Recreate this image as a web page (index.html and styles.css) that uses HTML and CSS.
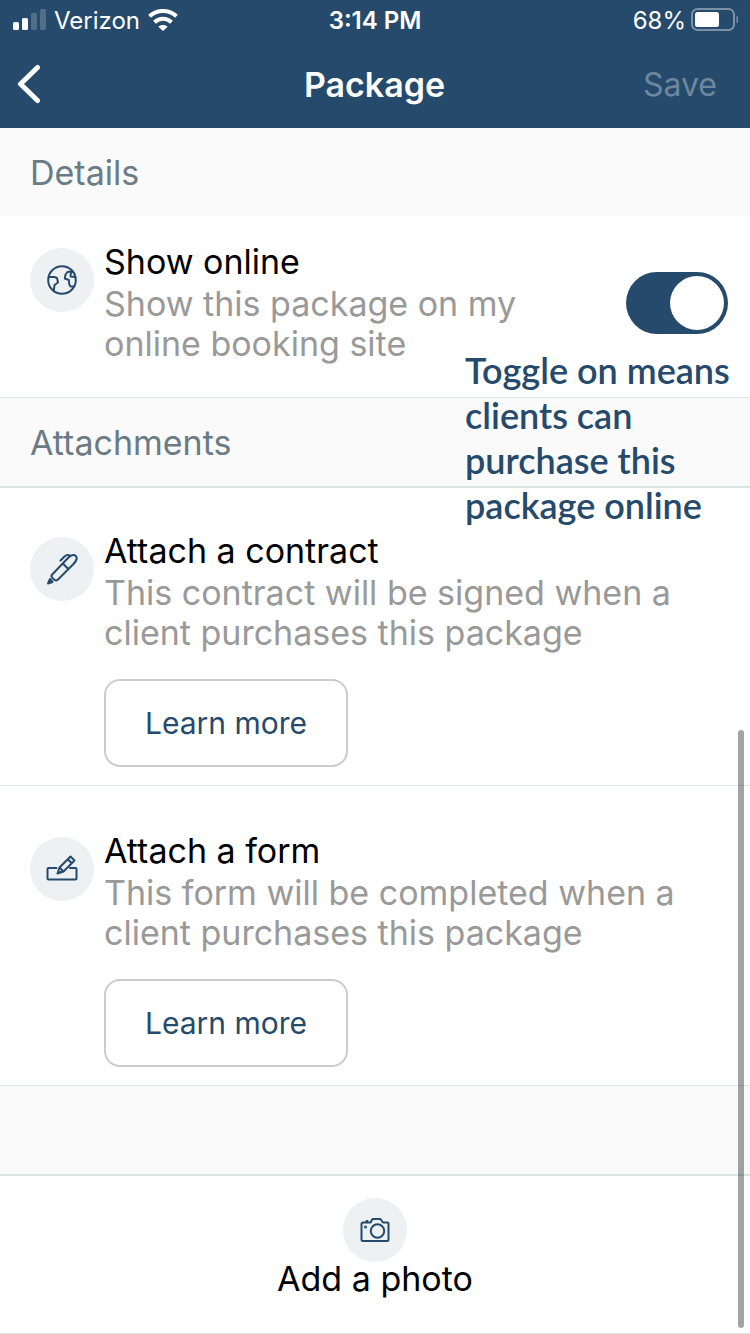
FILE: index.html
```html
<!DOCTYPE html>
<html lang="en">
<head>
<meta charset="utf-8">
<meta name="viewport" content="width=device-width, initial-scale=1">
<title>Package</title>
<link rel="stylesheet" href="styles.css">
</head>
<body>
<header class="top">
  <div class="status">
    <div class="status-left">
      <svg class="signal" width="34" height="22" viewBox="0 0 34 22" fill="#fff" aria-hidden="true">
        <rect x="1" y="13" width="6" height="8" rx="1.5"/><rect x="10" y="9" width="6" height="12" rx="1.5"/>
        <g opacity=".2"><rect x="19" y="4" width="6" height="17" rx="1.5"/><rect x="28" y="0" width="6" height="21" rx="1.5"/></g>
      </svg>
      <span>Verizon</span>
      <svg class="wifi" width="30" height="22" viewBox="0 0 30 22" aria-hidden="true">
        <path d="M1.5 7.2C9 .2 21 .2 28.5 7.2M6.5 13.3C11.5 8.7 18.5 8.7 23.5 13.3" fill="none" stroke="#fff" stroke-width="4"/>
        <path d="M10.3 17.8C13 15.4 17 15.400 19.700 17.800L15 22Z" fill="#fff"/>
      </svg>
    </div>
    <span class="clock">3:14 PM</span>
    <div class="status-right">
      <span>68%</span>
      <svg width="48" height="24" viewBox="0 0 48 24" aria-hidden="true">
        <rect x="2" y="1" width="42" height="21" rx="5.5" fill="none" stroke="#7c91a6" stroke-width="2"/>
        <rect x="5" y="4" width="24" height="15" rx="2.5" fill="#fff"/>
        <path d="M46.500 7.500c2.600 1.500 2.600 6.500 0 8z" fill="#7c91a6"/>
      </svg>
    </div>
  </div>
  <nav class="nav">
    <button class="back" type="button" aria-label="Back">
      <svg width="24" height="40" viewBox="0 0 24 40" aria-hidden="true"><path d="M21.500 3.500L4.500 20L21.500 36.500" fill="none" stroke="#fff" stroke-width="5" stroke-linecap="round" stroke-linejoin="round"/></svg>
    </button>
    <h1 class="title">Package</h1>
    <button class="save" type="button" disabled>Save</button>
  </nav>
</header>
<main class="content">
  <h2 class="section">Details</h2>
  <section class="row row-online">
    <span class="badge">
      <svg class="icon" viewBox="0 0 32 32" aria-hidden="true"><circle cx="16" cy="16" r="13.8"/><path d="M3 13H8.500L11 14L12 18.500L8.500 21L7.800 26.500M26.500 7.200L21.500 8L19.500 10.500L18.800 14.500L22.800 16L23.300 20.500L24.500 22.500H27.500M26.500 7.200L24.800 9.500L24.500 12.500L29 13"/></svg>
    </span>
    <label class="copy" for="online">
      <span class="name">Show online</span>
      <span class="desc">Show this package on my<br>online booking site</span>
    </label>
    <input class="toggle" id="online" type="checkbox" role="switch" checked>
    <p class="note">Toggle on means clients can purchase this package online</p>
  </section>
  <h2 class="section ruled">Attachments</h2>
  <section class="row row-attach">
    <span class="badge">
      <svg class="icon" viewBox="0 0 32 32" aria-hidden="true"><path d="M6.2 21.500L21.500 5.500C24.500 2 28 1 29.800 3C31.500 5 30.500 8 27.500 11L12 26.500C10.500 28 9 27.500 8 26.500L6.500 25C5.500 24 5.200 22.500 6.200 21.500ZM16.800 10.500L22.300 16M14.500 7.500L18.500 3.500C20.500 1.500 22.500 1.500 24.500 2.800"/><path d="M2 30.500L4 26L6.500 29Z" fill="#254a6b"/></svg>
    </span>
    <div class="copy">
      <h3 class="name">Attach a contract</h3>
      <p class="desc">This contract will be signed when a<br>client purchases this package</p>
      <button class="more" type="button">Learn more</button>
    </div>
  </section>
  <section class="row row-attach row-form">
    <span class="badge">
      <svg class="icon" viewBox="0 0 32 32" aria-hidden="true"><path d="M10.5 15H2.5Q1.5 15 1.5 16V25.5Q1.5 26.5 2.5 26.5H29.5Q30.5 26.5 30.5 25.5V16Q30.5 15 29.5 15H24M11.5 20.5L13.5 14.5L24.5 3.5L28.5 7.5L17.5 18.5ZM13.5 14.5L17.5 18.5M21.8 6.2L25.8 10.2M11.5 20.5L15 18.8"/></svg>
    </span>
    <div class="copy">
      <h3 class="name">Attach a form</h3>
      <p class="desc">This form will be completed when a<br>client purchases this package</p>
      <button class="more" type="button">Learn more</button>
    </div>
  </section>
  <div class="section ruled"></div>
  <button class="photo" type="button">
    <span class="badge">
      <svg class="icon" viewBox="0 0 32 32" aria-hidden="true"><path d="M4 8.500H11.500L13.500 5H21.500L24 8.500H28Q29.500 8.500 29.500 10V25.500Q29.500 27 28 27H4Q2.500 27 2.500 25.500V10Q2.500 8.500 4 8.500ZM7.500 7H8.500"/><circle cx="18.500" cy="17" r="6.700"/><circle cx="6.500" cy="13" r=".6"/></svg>
    </span>
    <span class="name">Add a photo</span>
  </button>
  <div class="thumb"></div>
</main>
</body>
</html>
```

FILE: styles.css
```css
* { box-sizing: border-box; }
body {
  margin: 0;
  min-height: 100vh;
  display: flex;
  flex-direction: column;
  background: #fff;
  color: #000;
  font-family: Inter, "Liberation Sans", sans-serif;
  font-size: 34px;
}
button { font: inherit; color: inherit; background: none; border: 0; padding: 0; }
h1, h2, h3, p { margin: 0; font-weight: 400; }
svg { display: block; flex: none; }

.top { background: #254a6b; color: #fff; }
.status {
  display: grid;
  grid-template-columns: 1fr auto 1fr;
  align-items: center;
  height: 40px;
  padding: 0 12px;
  font-size: 24px;
}
.status-left, .status-right { display: flex; align-items: center; }
.status-left { gap: 8px; }
.status-right { justify-content: flex-end; gap: 4px; }
.clock { font-weight: 600; }
.nav {
  display: grid;
  grid-template-columns: 1fr auto 1fr;
  align-items: center;
  height: 88px;
  padding: 0 33px 0 16px;
}
.back { justify-self: start; }
.title { font-size: 34px; font-weight: 600; padding-left: 16px; }
.save { justify-self: end; color: #6f879c; font-size: 32px; }

.section {
  display: flex;
  align-items: center;
  height: 88px;
  padding: 0 30px;
  background: #fafafa;
  color: #6a7b86;
  font-size: 34px;
}
.ruled { height: 90px; border-bottom: 2px solid #dce6e9; }

.row {
  position: relative;
  display: flex;
  align-items: flex-start;
  gap: 10px;
  padding: 0 22px 18px 30px;
  border-bottom: 1px solid #dce6e9;
}
.row-online { padding-top: 24px; padding-bottom: 33px; }
.row-attach { padding-top: 41px; }
.row-form { padding-top: 43px; }
.row .badge { margin-top: 8px; }
.badge {
  display: grid;
  place-items: center;
  flex: none;
  width: 64px;
  height: 64px;
  border-radius: 50%;
  background: #edf1f4;
}
.icon {
  width: 32px;
  height: 32px;
  fill: none;
  stroke: #254a6b;
  stroke-width: 2;
  stroke-linecap: round;
  stroke-linejoin: round;
}
.copy { flex: 1; }
.name { display: block; font-size: 34px; line-height: 44px; }
.desc { display: block; color: #999; font-size: 34px; line-height: 40px; }
.more {
  margin-top: 26px;
  width: 244px;
  height: 88px;
  border: 2px solid #ccc;
  border-radius: 16px;
  color: #254a6b;
  font-size: 30px;
}

.toggle {
  appearance: none;
  flex: none;
  display: flex;
  justify-content: flex-end;
  width: 102px;
  height: 62px;
  margin: 32px 0 0;
  padding: 4px;
  border-radius: 31px;
  background: #254a6b;
}
.toggle::before {
  content: "";
  width: 54px;
  height: 54px;
  border-radius: 50%;
  background: #fff;
}
.toggle:not(:checked) { justify-content: flex-start; background: #ccc; }

.note {
  position: absolute;
  z-index: 1;
  top: 132px;
  right: 10px;
  width: 275px;
  color: #254a6b;
  font-family: Lato, sans-serif;
  font-size: 36px;
  font-weight: 600;
  line-height: 45px;
}

.photo {
  display: flex;
  flex-direction: column;
  align-items: center;
  width: 100%;
  padding: 22px 0 27px;
  border-bottom: 1px solid #dce6e9;
}
.photo .name { line-height: 34px; margin-bottom: 10px; }
.thumb {
  position: fixed;
  right: 6px;
  bottom: 6px;
  width: 6px;
  height: 598px;
  border-radius: 3px;
  background: rgba(0, 0, 0, .36);
}
```
